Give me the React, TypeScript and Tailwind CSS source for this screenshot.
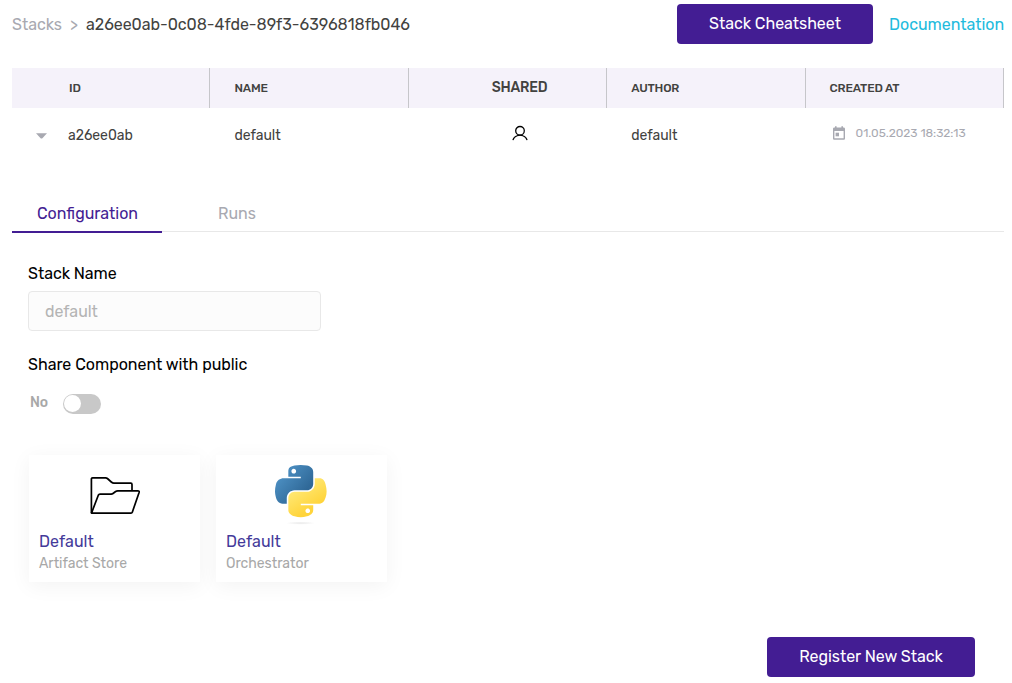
import type { ReactNode } from 'react';

function PersonIcon() {
  return (
    <svg width="16" height="16" viewBox="0 0 16 16" fill="none" stroke="#000" strokeWidth="1.3">
      <circle cx="8" cy="5.8" r="4.3" />
      <path d="M0.9 15.2C1.6 12.9 3.2 11.4 5.1 10.8C6.9 9.9 9.1 9.9 10.9 10.8C12.8 11.4 14.4 12.9 15.1 15.2" strokeWidth="1.2" />
    </svg>
  );
}

function CalendarIcon() {
  return (
    <svg width="12" height="14" viewBox="0 0 12 14" fill="#a8a9b1">
      <path fillRule="evenodd" d="M2 0.3h1.6v1.3h4.8V0.3H10v1.3h0.7c0.7 0 1.3 0.6 1.3 1.3v9.5c0 0.7-0.6 1.3-1.3 1.3H1.3C0.6 13.7 0 13.1 0 12.4V2.9c0-0.7 0.6-1.3 1.3-1.3H2zM1.4 4.9v7.4h9.2V4.9z" />
      <rect x="2.6" y="6.7" width="3.4" height="3.6" />
    </svg>
  );
}

function FolderIcon() {
  return (
    <svg width="52" height="40" viewBox="0 0 52 40" fill="none" stroke="#000" strokeWidth="1.7" strokeLinejoin="round">
      <path d="M2.4 38V4Q2.4 2.8 3.6 2.8H16.6Q17.6 2.8 18.4 3.5L22.3 7Q23.6 8.2 25 8.2H41.8Q43 8.2 43 9.4V15.7" />
      <path d="M2.5 38.1L9.3 20.2Q9.8 19.1 11 19.1H22.2Q23.2 19.1 24 18.5L26.6 16.5Q27.6 15.8 28.8 15.8H48.8Q50.6 15.8 50.1 17.5L43.3 37.2Q43 38.1 42 38.1Z" />
    </svg>
  );
}

function PythonLogo() {
  return (
    <svg width="52" height="60" viewBox="0 0 112 129">
      <defs>
        <linearGradient id="pyBlue" x1="0.1" y1="0.1" x2="0.85" y2="0.75">
          <stop offset="0" stopColor="#5095c9" />
          <stop offset="0.9" stopColor="#306998" />
        </linearGradient>
        <linearGradient id="pyYellow" x1="0.3" y1="0.2" x2="0.65" y2="0.75">
          <stop offset="0" stopColor="#ffe873" />
          <stop offset="1" stopColor="#ffd43b" />
        </linearGradient>
        <radialGradient id="pyShade">
          <stop offset="0" stopColor="#e8e8e8" />
          <stop offset="1" stopColor="#fff" />
        </radialGradient>
      </defs>
      <ellipse cx="55" cy="125" rx="32" ry="3.5" fill="url(#pyShade)" />
      <path fill="url(#pyBlue)" d="M54.919 0C50.335.022 45.958.413 42.106 1.095 30.76 3.099 28.7 7.295 28.7 15.032v10.219h26.813v3.406H18.638c-7.793 0-14.616 4.684-16.75 13.594-2.462 10.213-2.571 16.586 0 27.25 1.906 7.938 6.457 13.594 14.25 13.594h9.218v-12.25c0-8.85 7.657-16.657 16.75-16.657h26.782c7.455 0 13.406-6.138 13.406-13.625V15.032c0-7.266-6.13-12.725-13.406-13.938C64.282.328 59.502-.02 54.919 0zm-14.5 8.22c2.769 0 5.031 2.298 5.031 5.125 0 2.816-2.262 5.093-5.031 5.093-2.78 0-5.032-2.277-5.032-5.093 0-2.827 2.252-5.125 5.032-5.125z" />
      <path fill="url(#pyYellow)" d="M85.638 28.657v11.906c0 9.231-7.826 17-16.75 17H42.106c-7.336 0-13.406 6.279-13.406 13.625v25.531c0 7.267 6.318 11.541 13.406 13.625 8.487 2.496 16.626 2.947 26.782 0 6.75-1.954 13.406-5.887 13.406-13.625V86.501H55.513v-3.406h40.187c7.793 0 10.697-5.436 13.407-13.594 2.799-8.399 2.68-16.476 0-27.25-1.926-7.757-5.604-13.594-13.407-13.594zm-15.063 64.656c2.78 0 5.031 2.278 5.031 5.094 0 2.826-2.251 5.125-5.031 5.125-2.77 0-5.031-2.299-5.031-5.125 0-2.816 2.261-5.094 5.031-5.094z" />
    </svg>
  );
}

function HeaderCell({ children, className = '' }: { children: ReactNode; className?: string }) {
  return (
    <div className={`flex items-center border-r border-[#c6c6ca] text-xs leading-4 font-medium text-[#424240] ${className}`}>
      {children}
    </div>
  );
}

function StackCard({ icon, title, kind }: { icon: ReactNode; title: string; kind: string }) {
  return (
    <div className="flex h-[127px] w-[171px] flex-col bg-white px-2.5 shadow-[0_4px_20px_rgba(0,0,0,0.05)]">
      <div className="flex h-[75px] justify-center">{icon}</div>
      <div className="text-base leading-6 tracking-[0.04px] text-[#443a9a]">{title}</div>
      <div className="text-sm leading-5 text-[#a8a8a8]">{kind}</div>
    </div>
  );
}

export default function App() {
  return (
    <div className="flex h-[683px] w-[1012px] flex-col overflow-hidden bg-white pr-2 pl-3 font-[Rubik,Roboto,sans-serif] text-base leading-6 tracking-[-0.03px] text-[#424240]">
      <header className="flex h-[68px] items-start justify-between pt-1">
        <nav className="flex pt-[9px]">
          <span className="w-[58px] text-[#a8a9b1]">Stacks</span>
          <span className="w-4 text-[#a8a9b1]">&gt;</span>
          <span className="tracking-[-0.04px]">a26ee0ab-0c08-4fde-89f3-6396818fb046</span>
        </nav>
        <div className="flex">
          <button className="h-10 w-[196px] rounded bg-[#431d93] pb-px leading-6 text-white">Stack Cheatsheet</button>
          <a className="ml-4 w-[115px] pt-[9px] whitespace-nowrap text-[#22bbdd]">Documentation</a>
        </div>
      </header>

      <section>
        <div className="grid h-10 grid-cols-5 bg-[#f5f2fa]">
          <HeaderCell className="pl-[57px]">ID</HeaderCell>
          <HeaderCell className="pl-6 tracking-[-0.1px]">NAME</HeaderCell>
          <HeaderCell className="justify-center pl-6">
            <span className="text-sm leading-5 tracking-[-0.2px]">SHARED</span>
          </HeaderCell>
          <HeaderCell className="pl-6 tracking-[-0.18px]">AUTHOR</HeaderCell>
          <HeaderCell className="pl-6 tracking-[-0.18px]">CREATED AT</HeaderCell>
        </div>
        <div className="grid h-[84px] grid-cols-5 pt-[17px] text-sm leading-5">
          <div className="flex pt-px">
            <svg className="mt-[7px] mr-[21px] ml-6" width="11" height="6" viewBox="0 0 11 6" fill="#a8a9b1">
              <path d="M0 0.2H11L6.4 5.2Q5.5 6 4.6 5.2Z" />
            </svg>
            <span>a26ee0ab</span>
          </div>
          <div className="pt-px pl-6">default</div>
          <div className="flex justify-center pl-6">
            <PersonIcon />
          </div>
          <div className="pt-px pl-6">default</div>
          <div className="flex items-start pl-[27px] text-xs leading-4 text-[#a8a9b1]">
            <div className="mt-px mr-[11px]">
              <CalendarIcon />
            </div>
            <span>01.05.2023 18:32:13</span>
          </div>
        </div>
      </section>

      <div className="flex h-10 border-b border-[#e8e8e8] text-center">
        <div className="h-[41px] w-[150px] border-b-2 border-[#431d93] pt-2.5 pl-px tracking-normal text-[#431d93]">Configuration</div>
        <div className="w-[150px] pt-2.5 text-[#a8a9b1]">Runs</div>
      </div>

      <main className="flex flex-col pt-[30px] pl-4">
        <label className="text-black">Stack Name</label>
        <div className="mt-[5px] h-10 w-[293px] rounded border border-[#e8e8e8] bg-[#fcfcfc] pt-2 pl-4 text-[#b4b4b4]">default</div>
        <label className="mt-[22px] text-black">Share Component with public</label>
        <div className="mt-[15px] flex pl-0.5">
          <span className="w-[33px] pt-px text-sm leading-5 font-medium text-[#a8a8a8]">No</span>
          <div className="mt-0.5 h-5 w-[38px] rounded-full bg-[#c8c8c8] p-px">
            <div className="size-[17px] rounded-full bg-white" />
          </div>
        </div>
        <div className="mt-[41px] ml-px flex gap-4">
          <StackCard icon={<div className="pt-5 pl-px"><FolderIcon /></div>} title="Default" kind="Artifact Store" />
          <StackCard icon={<div className="pt-2.5 pr-px"><PythonLogo /></div>} title="Default" kind="Orchestrator" />
        </div>
      </main>

      <footer className="mt-[55px] flex justify-end pr-[29px]">
        <button className="h-10 w-[208px] rounded bg-[#431d93] pb-px leading-6 text-white">Register New Stack</button>
      </footer>
    </div>
  );
}
